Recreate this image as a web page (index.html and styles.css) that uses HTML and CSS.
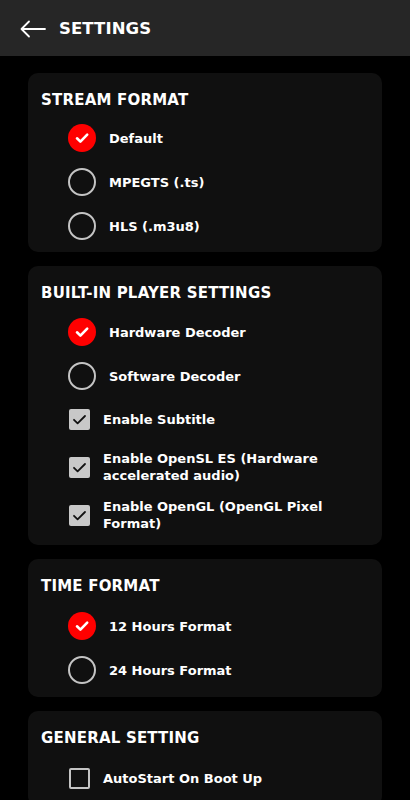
FILE: index.html
```html
<!DOCTYPE html>
<html>
<head>
<meta charset="utf-8">
<link rel="stylesheet" href="styles.css">
</head>
<body>
<header class="topbar">
  <svg class="back" width="26" height="18" viewBox="0 0 26 18"><path d="M25 9H2M9 1.5L1.5 9L9 16.5" fill="none" stroke="#fff" stroke-width="1.8" stroke-linecap="round" stroke-linejoin="round"/></svg>
  <h1 class="topbar-title">SETTINGS</h1>
</header>
<main class="content">
  <section class="card">
    <h2 class="card-title">STREAM FORMAT</h2>
    <div class="opt radio-row"><span class="radio on"><svg viewBox="0 0 28 28"><path d="M9 14.3l3.4 3.3L19.2 10.6" fill="none" stroke="#fff" stroke-width="2.6" stroke-linecap="round" stroke-linejoin="round"/></svg></span><span class="label">Default</span></div>
    <div class="opt radio-row"><span class="radio"></span><span class="label">MPEGTS (.ts)</span></div>
    <div class="opt radio-row"><span class="radio"></span><span class="label">HLS (.m3u8)</span></div>
  </section>
  <section class="card card--player">
    <h2 class="card-title">BUILT-IN PLAYER SETTINGS</h2>
    <div class="opt radio-row"><span class="radio on"><svg viewBox="0 0 28 28"><path d="M9 14.3l3.4 3.3L19.2 10.6" fill="none" stroke="#fff" stroke-width="2.6" stroke-linecap="round" stroke-linejoin="round"/></svg></span><span class="label">Hardware Decoder</span></div>
    <div class="opt radio-row"><span class="radio"></span><span class="label">Software Decoder</span></div>
    <div class="opt check-row"><span class="check on"><svg viewBox="0 0 21 21"><path d="M5 10.8l3.6 3.5L16 7" fill="none" stroke="#111" stroke-width="1.8" stroke-linecap="round" stroke-linejoin="round"/></svg></span><span class="label">Enable Subtitle</span></div>
    <div class="opt check-row"><span class="check on"><svg viewBox="0 0 21 21"><path d="M5 10.8l3.6 3.5L16 7" fill="none" stroke="#111" stroke-width="1.8" stroke-linecap="round" stroke-linejoin="round"/></svg></span><span class="label">Enable OpenSL ES (Hardware accelerated audio)</span></div>
    <div class="opt check-row"><span class="check on"><svg viewBox="0 0 21 21"><path d="M5 10.8l3.6 3.5L16 7" fill="none" stroke="#111" stroke-width="1.8" stroke-linecap="round" stroke-linejoin="round"/></svg></span><span class="label">Enable OpenGL (OpenGL Pixel Format)</span></div>
  </section>
  <section class="card card--time">
    <h2 class="card-title">TIME FORMAT</h2>
    <div class="opt radio-row"><span class="radio on"><svg viewBox="0 0 28 28"><path d="M9 14.3l3.4 3.3L19.2 10.6" fill="none" stroke="#fff" stroke-width="2.6" stroke-linecap="round" stroke-linejoin="round"/></svg></span><span class="label">12 Hours Format</span></div>
    <div class="opt radio-row"><span class="radio"></span><span class="label">24 Hours Format</span></div>
  </section>
  <section class="card card--general">
    <h2 class="card-title">GENERAL SETTING</h2>
    <div class="opt check-row"><span class="check"></span><span class="label">AutoStart On Boot Up</span></div>
  </section>
</main>
</body>
</html>
```

FILE: styles.css
```css
html, body {
  margin: 0;
  padding: 0;
  background: #000;
  color: #fff;
  font-family: "DejaVu Sans", "Open Sans", sans-serif;
}
body {
  height: 800px;
  overflow: hidden;
}
.topbar {
  height: 56px;
  background: #262626;
  display: flex;
  align-items: center;
  padding-left: 20px;
  box-sizing: border-box;
}
.back {
  display: block;
  margin-top: 1px;
}
.topbar-title {
  margin: 0 0 0 13px;
  font-size: 16.5px;
  font-weight: 700;
  letter-spacing: 0.1px;
}
.content {
  padding: 17px 28px 0;
  display: flex;
  flex-direction: column;
  gap: 14px;
}
.card {
  background: #101010;
  border-radius: 10px;
  padding: 14px 13px 4px;
}
.card--player {
  padding-bottom: 6px;
}
.card--player .card-title {
  margin-bottom: 6px;
}
.card--time {
  padding-bottom: 5px;
}
.card--time .card-title {
  margin-bottom: 7px;
}
.card--general .check-row {
  margin-top: 2px;
}
.card-title {
  margin: 0 0 5px;
  padding-top: 2px;
  font-size: 15px;
  line-height: 22px;
  font-weight: 700;
  letter-spacing: 0.2px;
}
.opt {
  display: flex;
  align-items: center;
  font-size: 13px;
  font-weight: 600;
}
.radio-row {
  height: 44px;
  padding-left: 27px;
}
.check-row {
  min-height: 48px;
  padding: 7px 0 7px 28px;
  box-sizing: border-box;
  line-height: 17px;
}
.radio-row + .check-row {
  min-height: 42px;
  margin-bottom: 3px;
}
.radio {
  width: 28px;
  height: 28px;
  border-radius: 50%;
  box-sizing: border-box;
  border: 2px solid #c4c4c4;
  flex: none;
  margin-right: 13px;
  display: flex;
}
.radio.on {
  background: #f00;
  border: none;
}
.radio svg {
  width: 28px;
  height: 28px;
}
.check {
  width: 21px;
  height: 21px;
  box-sizing: border-box;
  border: 2px solid #c4c4c4;
  border-radius: 2px;
  flex: none;
  margin-right: 13px;
  display: flex;
}
.check.on {
  background: #c8c8c8;
  border: none;
}
.check svg {
  width: 21px;
  height: 21px;
}
.label {
  display: block;
}
```
